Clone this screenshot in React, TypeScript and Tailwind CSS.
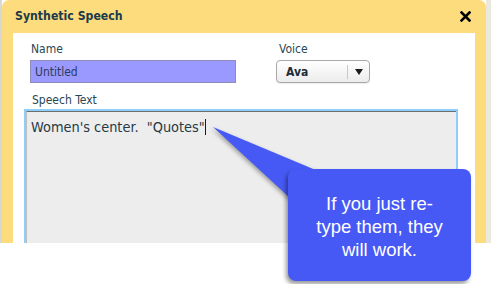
const ui = { fontFamily: '"DejaVu Sans Condensed", "DejaVu Sans", Tahoma, sans-serif' };
const callout = { fontFamily: '"Liberation Sans", Arial, sans-serif' };

const CloseIcon = () => (
  <svg width="11" height="11" viewBox="0 0 11 11">
    <path d="M1.5 1.5 L9.5 9.5 M9.5 1.5 L1.5 9.5" stroke="#000" strokeWidth="2.6" strokeLinecap="square" />
  </svg>
);

const App = () => {
  return (
    <div className="relative w-[491px] h-[284px] bg-white overflow-hidden" style={ui}>
      <div className="flex h-[243px]">
        <div className="w-[2px] bg-[#d8d8d0]" />
        <div className="w-[484px] flex flex-col bg-[#fddc7e] rounded-t-[7px] px-[11px]">
          <div className="h-[33px] flex items-center justify-between pl-[2px] pr-[4px]">
            <span className="text-[12.2px] font-bold text-[#1b3a4a]">Synthetic Speech</span>
            <CloseIcon />
          </div>
          <div className="flex-1 bg-white flex flex-col pt-[9px] overflow-hidden">
            <div className="flex pl-[17px] gap-[40px]">
              <div className="flex flex-col w-[206px]">
                <label className="pl-[1px] text-[12px] leading-[15px] text-[#2a4755]">Name</label>
                <div className="mt-[3px] h-[23px] bg-[#9999ff] border border-[#8d8db8] pl-[4px] flex items-center text-[12px] text-[#2b3b5c]">
                  Untitled
                </div>
              </div>
              <div className="flex flex-col">
                <label className="pl-[3px] text-[12px] leading-[15px] text-[#2a4755]">Voice</label>
                <div className="mt-[3px] w-[94px] h-[23px] rounded-[4px] border border-[#a9a9a9] bg-gradient-to-b from-white to-[#ececec] flex items-center shadow-[0_1px_1px_rgba(0,0,0,0.08)]">
                  <span className="pl-[9px] w-[70px] text-[12px] font-bold text-[#1d2d3a]">Ava</span>
                  <div className="w-px h-[14px] bg-[#c8c8c8]" />
                  <span className="flex-1 flex justify-center">
                    <svg width="8" height="6" viewBox="0 0 8 6">
                      <path d="M0 0 H8 L4 6 Z" fill="#1a1a1a" />
                    </svg>
                  </span>
                </div>
              </div>
            </div>
            <label className="mt-[10px] pl-[19px] text-[12px] leading-[15px] text-[#2a4755]">Speech Text</label>
            <div className="mt-[1px] ml-[11px] mr-[17px] flex-1 border-2 border-b-0 border-[#8ccffa] flex">
              <div className="flex-1 bg-[#ededed] border-t border-l border-t-[#6e6e6e] border-l-[#bdbdbd] pl-[4px] pt-[3px]">
                <span className="whitespace-pre text-[14.4px] leading-[17px] text-[#253a45]">
                  Women's center.  "Quotes"
                </span>
                <span className="inline-block align-[-3px] w-px h-[16px] bg-[#1a1a1a]" />
              </div>
            </div>
          </div>
        </div>
        <div className="flex-1 bg-[#ebe8de]" />
      </div>

      <svg className="absolute left-0 top-0 pointer-events-none" width="491" height="284">
        <polygon
          points="213,127 318,171 290,198"
          fill="#4759f5"
          style={{ filter: 'drop-shadow(-1px 2px 2px rgba(0,0,0,0.35))' }}
        />
      </svg>
      <div
        className="absolute left-[288px] top-[169px] w-[183px] h-[112px] rounded-[8px] bg-[#4759f5] shadow-[-2px_3px_4px_rgba(0,0,0,0.4)] flex items-center justify-center text-center text-white text-[18.5px] leading-[23px] pt-[2px]"
        style={callout}
      >
        <div>
          If you just re-
          <br />
          type them, they
          <br />
          will work.
        </div>
      </div>
    </div>
  );
};

export default App;
